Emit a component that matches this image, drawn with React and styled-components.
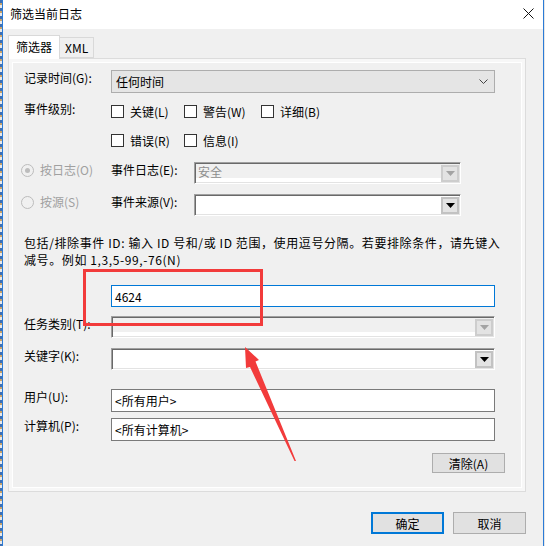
import React from 'react';
import styled, { createGlobalStyle } from 'styled-components';

const GlobalStyle = createGlobalStyle`
    *, *::before, *::after {
        box-sizing: border-box;
    }
    html, body {
        margin: 0;
        padding: 0;
        background: #f0f0f0;
    }
    body {
        font-family: "Noto Sans CJK SC", "Noto Sans", sans-serif;
        font-size: 12px;
        color: #000;
    }
`;

const Screen = styled.div`
    position: relative;
    width: 545px;
    height: 546px;
    display: grid;
    grid-template-columns: 2px 1fr 1px;
    overflow: hidden;
`;

const BehindEdge = styled.div`
    background: repeating-linear-gradient(
        180deg,
        #3d6fb4 0 3px,
        #c9a36a 3px 5px,
        #e8e8e8 5px 8px
    );
`;

const RightEdge = styled.div`
    background: #e6e6e6;
`;

const Dialog = styled.div`
    display: flex;
    flex-direction: column;
    min-width: 0;
    border-left: 1px solid #2b7bd6;
    border-right: 1px solid #2b7bd6;
    background: #f0f0f0;
`;

const TitleBar = styled.div`
    height: 29px;
    flex: none;
    background: #fff;
    display: flex;
    align-items: center;
    justify-content: space-between;
    padding: 0 9px 2px 7px;
`;

const Title = styled.span`
    font-size: 12px;
`;

const Body = styled.div`
    flex: 1;
    display: flex;
    flex-direction: column;
    padding: 6px 17px 0 5px;
`;

const TabStrip = styled.div`
    display: flex;
    align-items: flex-end;
    height: 23px;
`;

const Tab = styled.div`
    position: relative;
    z-index: 1;
    height: ${(p) => (p.$active ? 24 : 21)}px;
    margin-bottom: ${(p) => (p.$active ? -1 : 0)}px;
    padding: 0 ${(p) => (p.$active ? 7 : 5)}px;
    line-height: ${(p) => (p.$active ? 22 : 19)}px;
    background: ${(p) => (p.$active ? '#fff' : '#f0f0f0')};
    border: 1px solid #d9d9d9;
    border-bottom: ${(p) => (p.$active ? 'none' : '1px solid #d9d9d9')};
    border-left: ${(p) => (p.$active ? '1px solid #d9d9d9' : 'none')};
    font-size: 12px;
`;

const Panel = styled.div`
    height: 434px;
    min-width: 0;
    border: 1px solid #dcdcdc;
    padding: 3px;
    background: #f7f7f7;
`;

const Page = styled.div`
    height: 100%;
    border: 1px solid #fff;
    background: #f0f0f0;
    padding: 0 26px 0 11px;
    display: flex;
    flex-direction: column;
`;

const Row = styled.div`
    display: grid;
    grid-template-columns: ${(p) => p.$cols || '87px 1fr'};
    align-items: start;
    height: ${(p) => p.$h}px;
    margin-top: ${(p) => p.$mt}px;
`;

const Label = styled.span`
    line-height: 16px;
    white-space: nowrap;
    color: ${(p) => (p.$disabled ? '#a0a0a0' : '#000')};
`;

const ModernSelect = styled.div`
    height: 100%;
    display: flex;
    align-items: center;
    justify-content: space-between;
    padding: 0 6px 0 4px;
    border: 1px solid #adadad;
    background: #e5e5e5;
`;

const Checks = styled.div`
    display: flex;
    align-items: center;
    height: 100%;
`;

const CheckItem = styled.label`
    display: flex;
    align-items: center;
    gap: 6px;
    width: ${(p) => p.$w}px;
    white-space: nowrap;
`;

const Box = styled.span`
    width: 13px;
    height: 13px;
    border: 1px solid #333;
    background: #fff;
    flex: none;
`;

const RadioItem = styled.div`
    display: flex;
    align-items: center;
    gap: 6px;
    height: 16px;
    margin-left: -3px;
`;

const Radio = styled.span`
    width: 13px;
    height: 13px;
    border-radius: 50%;
    border: 1px solid #bcbcbc;
    background: #f0f0f0;
    display: flex;
    align-items: center;
    justify-content: center;
    flex: none;

    &::after {
        content: '';
        width: 5px;
        height: 5px;
        border-radius: 50%;
        background: ${(p) => (p.$checked ? '#bcbcbc' : 'transparent')};
    }
`;

const SunkenCombo = styled.div`
    height: 100%;
    display: flex;
    align-items: center;
    border: 1px solid;
    border-color: #a0a0a0 #fff #fff #a0a0a0;
    box-shadow: inset 1px 1px 0 #696969, inset -1px -1px 0 #e3e3e3;
    background: ${(p) =>
        p.$disabled ? 'linear-gradient(#f0f0f0 0 calc(100% - 5px), #fff 0)' : '#fff'};
    padding: 1px 1px 1px 2px;
    color: #8d8d8d;
`;

const ComboText = styled.span`
    flex: 1;
    align-self: flex-start;
    line-height: 16px;
    padding-left: 1px;
`;

const DropButton = styled.span`
    width: 18px;
    height: 17px;
    flex: none;
    display: flex;
    align-items: center;
    justify-content: center;
    border: 2px solid ${(p) => (p.$disabled ? '#cdcdcd' : '#c2c2c2')};
    background: #e3e3e3;
`;

const Description = styled.div`
    width: 0;
    margin-top: 18px;
    line-height: 17px;
    letter-spacing: 0.6px;
    white-space: nowrap;
`;

const TextBox = styled.div`
    height: 100%;
    display: flex;
    align-items: center;
    padding-left: 3px;
    border: 1px solid ${(p) => (p.$focus ? '#0078d7' : '#7a7a7a')};
    background: #fff;
`;

const ButtonRow = styled.div`
    display: flex;
    justify-content: flex-end;
    gap: 9px;
    margin-top: ${(p) => p.$mt}px;
    margin-right: ${(p) => p.$mr || 0}px;
`;

const PushButton = styled.div`
    width: 73px;
    height: ${(p) => p.$h}px;
    display: flex;
    align-items: center;
    justify-content: center;
    background: #e1e1e1;
    border: ${(p) => (p.$default ? '2px solid #0078d7' : '1px solid #adadad')};
`;

const Mark = styled.div`
    position: absolute;
    left: 83px;
    top: 269px;
    width: 180px;
    height: 57px;
    border: 3px solid #f23b3b;
    pointer-events: none;
`;

const ArrowLayer = styled.svg`
    position: absolute;
    left: 0;
    top: 0;
    pointer-events: none;
`;

function CloseIcon() {
    return (
        <svg width="11" height="11" viewBox="0 0 11 11">
            <path d="M0.5 0.5 L10.5 10.5 M10.5 0.5 L0.5 10.5" stroke="#111" strokeWidth="1" />
        </svg>
    );
}

function Chevron() {
    return (
        <svg width="9" height="5" viewBox="0 0 9 5">
            <path d="M0.5 0.5 L4.5 4.5 L8.5 0.5" fill="none" stroke="#444" strokeWidth="1" />
        </svg>
    );
}

function DropArrow({ disabled }) {
    return (
        <svg width="9" height="5" viewBox="0 0 9 5">
            <path d="M0 0 H9 L4.5 5 Z" fill={disabled ? '#a3a3a3' : '#000'} />
        </svg>
    );
}

function Combo({ disabled, text }) {
    return (
        <SunkenCombo $disabled={disabled}>
            <ComboText>{text}</ComboText>
            <DropButton $disabled={disabled}>
                <DropArrow disabled={disabled} />
            </DropButton>
        </SunkenCombo>
    );
}

function Check({ w, children }) {
    return (
        <CheckItem $w={w}>
            <Box />
            {children}
        </CheckItem>
    );
}

export default function App() {
    return (
        <>
            <GlobalStyle />
            <Screen>
                <BehindEdge />
                <Dialog>
                    <TitleBar>
                        <Title>筛选当前日志</Title>
                        <CloseIcon />
                    </TitleBar>
                    <Body>
                        <TabStrip>
                            <Tab $active>筛选器</Tab>
                            <Tab>XML</Tab>
                        </TabStrip>
                        <Panel>
                            <Page>
                                <Row $h={23} $mt={7}>
                                    <Label>记录时间(G):</Label>
                                    <ModernSelect>
                                        <span>任何时间</span>
                                        <Chevron />
                                    </ModernSelect>
                                </Row>
                                <Row $h={21} $mt={8}>
                                    <Label>事件级别:</Label>
                                    <Checks>
                                        <Check w={73}>关键(L)</Check>
                                        <Check w={77}>警告(W)</Check>
                                        <Check w={80}>详细(B)</Check>
                                    </Checks>
                                </Row>
                                <Row $h={21} $mt={8}>
                                    <span />
                                    <Checks>
                                        <Check w={73}>错误(R)</Check>
                                        <Check w={77}>信息(I)</Check>
                                    </Checks>
                                </Row>
                                <Row $h={22} $mt={11} $cols="87px 83px 267px">
                                    <RadioItem>
                                        <Radio $checked />
                                        <Label $disabled>按日志(O)</Label>
                                    </RadioItem>
                                    <Label>事件日志(E):</Label>
                                    <Combo disabled text="安全" />
                                </Row>
                                <Row $h={22} $mt={10} $cols="87px 83px 267px">
                                    <RadioItem>
                                        <Radio />
                                        <Label $disabled>按源(S)</Label>
                                    </RadioItem>
                                    <Label>事件来源(V):</Label>
                                    <Combo />
                                </Row>
                                <Description>
                                    包括/排除事件 ID: 输入 ID 号和/或 ID 范围，使用逗号分隔。若要排除条件，请先键入
                                    <br />
                                    减号。例如 1,3,5-99,-76(N)
                                </Description>
                                <Row $h={22} $mt={17}>
                                    <span />
                                    <TextBox $focus>4624</TextBox>
                                </Row>
                                <Row $h={22} $mt={9}>
                                    <Label>任务类别(T):</Label>
                                    <Combo disabled />
                                </Row>
                                <Row $h={22} $mt={10}>
                                    <Label>关键字(K):</Label>
                                    <Combo />
                                </Row>
                                <Row $h={23} $mt={19}>
                                    <Label>用户(U):</Label>
                                    <TextBox>&lt;所有用户&gt;</TextBox>
                                </Row>
                                <Row $h={23} $mt={6}>
                                    <Label>计算机(P):</Label>
                                    <TextBox>&lt;所有计算机&gt;</TextBox>
                                </Row>
                                <ButtonRow $mt={12} $mr={-10}>
                                    <PushButton $h={20}>清除(A)</PushButton>
                                </ButtonRow>
                            </Page>
                        </Panel>
                        <ButtonRow $mt={20}>
                            <PushButton $h={22} $default>确定</PushButton>
                            <PushButton $h={22}>取消</PushButton>
                        </ButtonRow>
                    </Body>
                </Dialog>
                <RightEdge />
                <Mark />
                <ArrowLayer width="545" height="546" viewBox="0 0 545 546">
                    <polygon
                        points="245,347 259,360 255.5,361.5 296,461 294.5,461 250,367 246,368"
                        fill="#f23b3b"
                    />
                </ArrowLayer>
            </Screen>
        </>
    );
}
